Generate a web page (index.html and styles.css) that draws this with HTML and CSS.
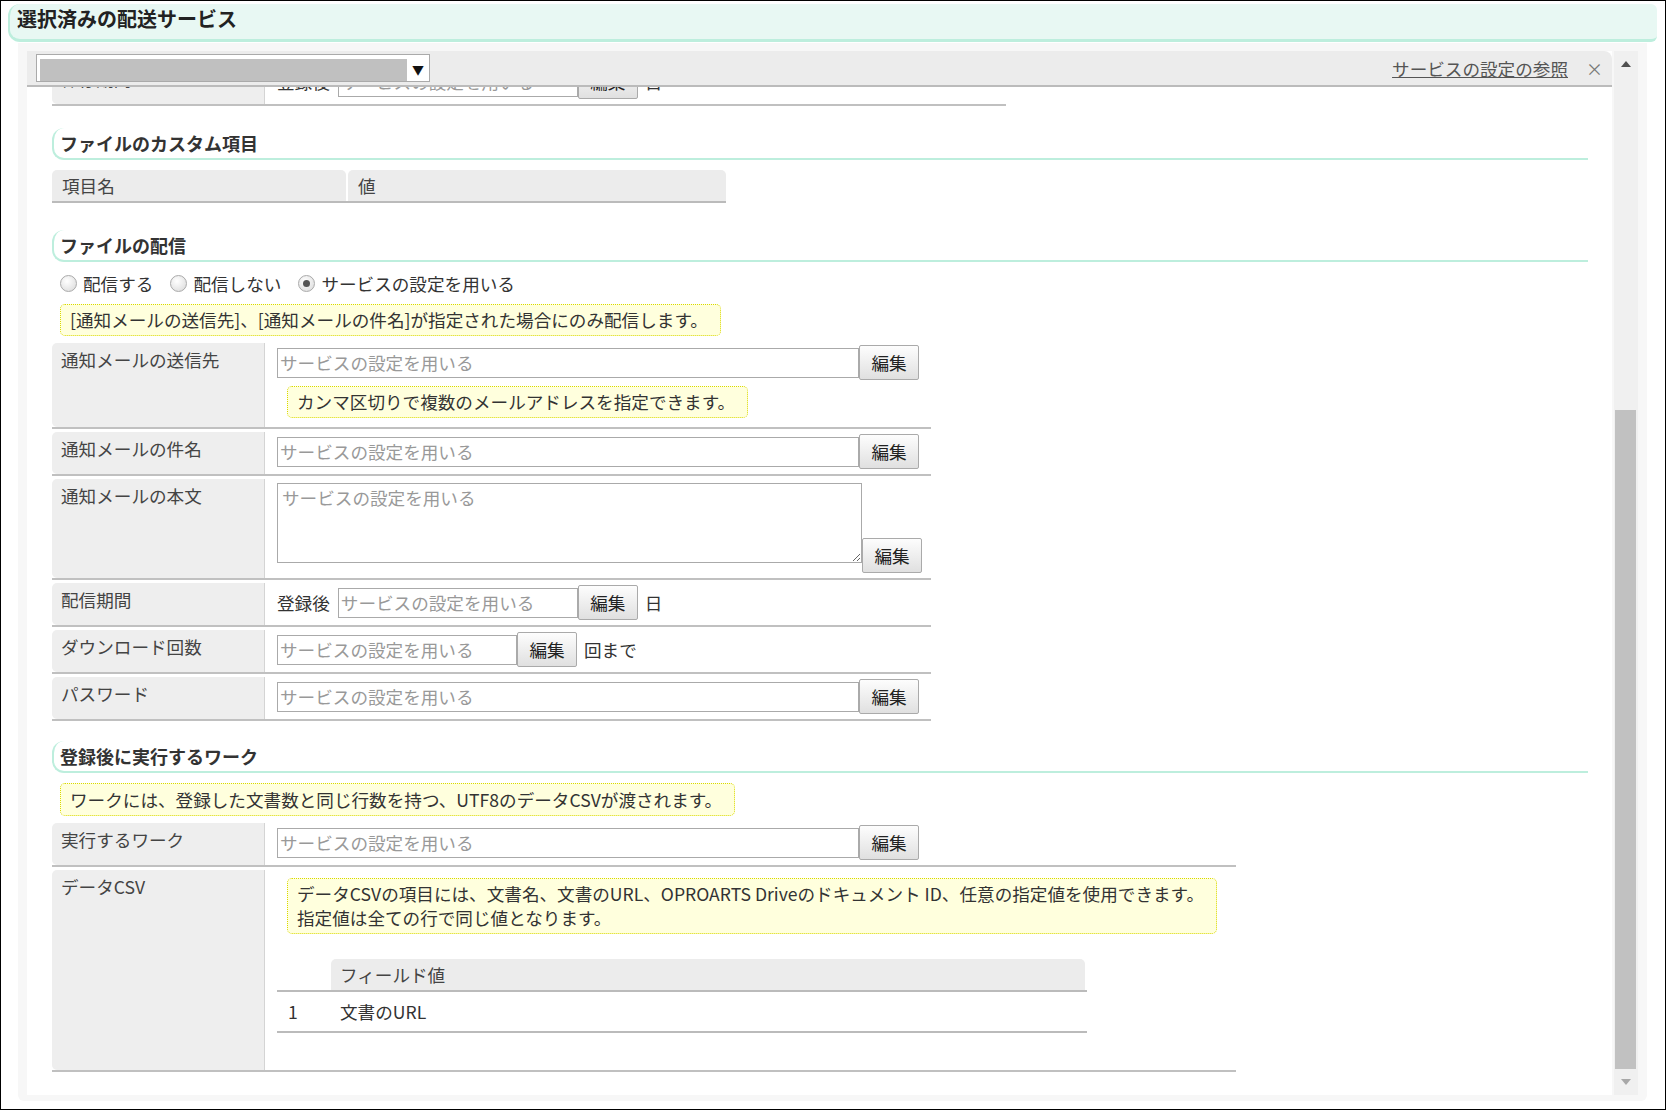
FILE: index.html
```html
<!DOCTYPE html>
<html lang="ja">
<head>
    <meta charset="UTF-8">
    <meta name="viewport" content="width=device-width, initial-scale=1.0">
    <title>選択済みの配送サービス</title>
    <link rel="stylesheet" href="styles.css">
</head>
<body>
    <div class="frame">
        <div class="title-bar">
            <h1>選択済みの配送サービス</h1>
        </div>

        <div class="panel">
            <div class="viewer">
                <div class="toolbar">
                    <div class="select">
                        <span class="select-value"></span>
                        <span class="select-arrow">▼</span>
                    </div>
                    <div class="toolbar-right">
                        <a class="ref-link" href="#">サービスの設定の参照</a>
                        <span class="close">×</span>
                    </div>
                </div>

                <div class="scroll-area">
                    <div class="content">
                        <!-- scrolled: only the bottom of this row is visible -->
                        <div class="form-row row-partial">
                            <div class="label-cell">保存期間</div>
                            <div class="value-cell">
                                <div class="field">
                                    <span class="pre-text">登録後</span>
                                    <input class="text-input short" type="text" placeholder="サービスの設定を用いる">
                                    <button class="btn">編集</button>
                                    <span class="post-text">日</span>
                                </div>
                            </div>
                        </div>

                        <h2 class="section-head">ファイルのカスタム項目</h2>
                        <div class="custom-table">
                            <div class="th th-name">項目名</div>
                            <div class="th th-value">値</div>
                        </div>

                        <h2 class="section-head head-gap">ファイルの配信</h2>
                        <div class="radios">
                            <span class="radio"></span><span class="radio-label">配信する</span>
                            <span class="radio"></span><span class="radio-label">配信しない</span>
                            <span class="radio checked"></span><span class="radio-label">サービスの設定を用いる</span>
                        </div>
                        <div class="note-line">
                            <div class="note">[通知メールの送信先]、[通知メールの件名]が指定された場合にのみ配信します。</div>
                        </div>

                        <div class="form-row">
                            <div class="label-cell">通知メールの送信先</div>
                            <div class="value-cell">
                                <div class="field">
                                    <input class="text-input" type="text" placeholder="サービスの設定を用いる">
                                    <button class="btn">編集</button>
                                </div>
                                <div class="note cell-note">カンマ区切りで複数のメールアドレスを指定できます。</div>
                            </div>
                        </div>
                        <div class="form-row">
                            <div class="label-cell">通知メールの件名</div>
                            <div class="value-cell">
                                <div class="field">
                                    <input class="text-input" type="text" placeholder="サービスの設定を用いる">
                                    <button class="btn">編集</button>
                                </div>
                            </div>
                        </div>
                        <div class="form-row">
                            <div class="label-cell">通知メールの本文</div>
                            <div class="value-cell">
                                <div class="field field-area">
                                    <textarea class="text-area" placeholder="サービスの設定を用いる"></textarea>
                                    <button class="btn btn-area">編集</button>
                                </div>
                            </div>
                        </div>
                        <div class="form-row">
                            <div class="label-cell">配信期間</div>
                            <div class="value-cell">
                                <div class="field">
                                    <span class="pre-text">登録後</span>
                                    <input class="text-input short" type="text" placeholder="サービスの設定を用いる">
                                    <button class="btn">編集</button>
                                    <span class="post-text">日</span>
                                </div>
                            </div>
                        </div>
                        <div class="form-row">
                            <div class="label-cell">ダウンロード回数</div>
                            <div class="value-cell">
                                <div class="field">
                                    <input class="text-input short" type="text" placeholder="サービスの設定を用いる">
                                    <button class="btn">編集</button>
                                    <span class="post-text">回まで</span>
                                </div>
                            </div>
                        </div>
                        <div class="form-row">
                            <div class="label-cell">パスワード</div>
                            <div class="value-cell">
                                <div class="field">
                                    <input class="text-input" type="text" placeholder="サービスの設定を用いる">
                                    <button class="btn">編集</button>
                                </div>
                            </div>
                        </div>

                        <h2 class="section-head head-work">登録後に実行するワーク</h2>
                        <div class="note-line note-line-work">
                            <div class="note">ワークには、登録した文書数と同じ行数を持つ、UTF8のデータCSVが渡されます。</div>
                        </div>
                        <div class="form-row row-wide">
                            <div class="label-cell">実行するワーク</div>
                            <div class="value-cell">
                                <div class="field">
                                    <input class="text-input" type="text" placeholder="サービスの設定を用いる">
                                    <button class="btn">編集</button>
                                </div>
                            </div>
                        </div>
                        <div class="form-row row-wide">
                            <div class="label-cell">データCSV</div>
                            <div class="value-cell csv-cell">
                                <div class="note cell-note csv-note">データCSVの項目には、文書名、文書のURL、OPROARTS Driveのドキュメント ID、任意の指定値を使用できます。<br>指定値は全ての行で同じ値となります。</div>
                                <div class="fields">
                                    <div class="fields-head">
                                        <div class="col-num"></div>
                                        <div class="col-value">フィールド値</div>
                                    </div>
                                    <div class="fields-row">
                                        <div class="col-num">1</div>
                                        <div class="col-text">文書のURL</div>
                                    </div>
                                </div>
                            </div>
                        </div>
                    </div>
                </div>
            </div>

            <div class="scrollbar">
                <div class="sb-up"><span class="arrow-up"></span></div>
                <div class="sb-thumb"></div>
                <div class="sb-down"><span class="arrow-down"></span></div>
            </div>
        </div>
    </div>
</body>
</html>
```

FILE: styles.css
```css
* {
    box-sizing: border-box;
    margin: 0;
    padding: 0;
}

body {
    font-family: "Noto Sans CJK JP", "Noto Sans", sans-serif;
    font-size: 17.6px;
    color: #333;
    background-color: #fff;
}

.frame {
    width: 1666px;
    height: 1110px;
    border: 1px solid #000;
    padding-top: 3px;
    overflow: hidden;
}

/* title */
.title-bar {
    margin: 0 8px 0 7px;
    height: 38px;
    background-color: #e8f8f3;
    border-left: 2px solid #bdeedd;
    border-bottom: 3px solid #bdeedd;
    border-radius: 12px 6px 6px 12px;
    padding-left: 7px;
}

.title-bar h1 {
    font-size: 20px;
    line-height: 30px;
    font-weight: bold;
    color: #222;
}

/* panel */
.panel {
    margin: 1px 18px 0 17px;
    height: 1058px;
    background-color: #f7f7f7;
    border-radius: 0 0 6px 6px;
    padding: 8px 9px 6px 9px;
    display: flex;
}

.viewer {
    flex: 1;
    min-width: 0;
    display: flex;
    flex-direction: column;
    background-color: #fff;
}

.toolbar {
    flex: none;
    height: 36px;
    background-color: #ececec;
    border-bottom: 2px solid #bbb;
    border-radius: 0 8px 0 0;
    display: flex;
    align-items: center;
    justify-content: space-between;
    padding: 0 9px 0 9px;
}

.select {
    width: 394px;
    height: 28px;
    border: 1px solid #aaa;
    background-color: #fff;
    display: flex;
    align-items: center;
    padding: 3px 0 0 3px;
}

.select-value {
    width: 367px;
    height: 22px;
    background-color: #c0c0c0;
    align-self: flex-end;
}

.select-arrow {
    flex: 1;
    text-align: center;
    font-size: 12px;
    color: #111;
}

.toolbar-right {
    display: flex;
    align-items: center;
    gap: 18px;
}

.ref-link {
    color: #555;
    text-decoration: underline;
    font-size: 17.6px;
}

.close {
    font-size: 17px;
    color: #777;
}

.scroll-area {
    flex: 1;
    overflow: hidden;
}

.content {
    padding: 0 24px 0 25px;
}

/* section heading */
.section-head {
    margin-top: 22px;
    height: 32px;
    border-left: 2px solid #bdeedd;
    border-bottom: 2px solid #bdeedd;
    border-radius: 12px 0 0 12px;
    padding-left: 6px;
    font-size: 18px;
    line-height: 30px;
    font-weight: bold;
    color: #333;
}

.head-gap {
    margin-top: 27px;
}

.head-work {
    margin-top: 20px;
}

/* custom items table */
.custom-table {
    margin-top: 10px;
    width: 674px;
    display: flex;
    gap: 2px;
    border-bottom: 2px solid #bbb;
}

.th {
    height: 31px;
    line-height: 31px;
    padding-left: 10px;
    background-color: #ececec;
    border-radius: 5px 5px 0 0;
    color: #444;
}

.th-name {
    width: 294px;
}

.th-value {
    flex: 1;
}

/* radios */
.radios {
    margin-top: 8px;
    height: 26px;
    display: flex;
    align-items: center;
    padding-left: 8px;
}

.radio {
    width: 17px;
    height: 17px;
    border-radius: 50%;
    border: 1px solid #aaa;
    background: radial-gradient(circle at 40% 35%, #fff, #d8d8d8);
    margin-right: 6px;
    display: flex;
    align-items: center;
    justify-content: center;
}

.radio.checked::after {
    content: "";
    width: 7px;
    height: 7px;
    border-radius: 50%;
    background-color: #555;
}

.radio-label {
    margin-right: 17px;
    color: #333;
}

/* notes */
.note-line {
    display: flex;
    padding: 8px 0 4px 8px;
}

.note-line-work {
    padding-top: 10px;
    padding-bottom: 4px;
}

.note-line-work .note {
    padding-top: 4px;
}

.note {
    display: inline-block;
    background-color: #ffffdd;
    border: 1px dotted #d9d900;
    border-radius: 5px;
    padding: 3px 12px 3px 9px;
    line-height: 24px;
    color: #333;
}

.cell-note {
    margin: 6px 0 4px 10px;
}

/* form rows */
.form-row {
    display: flex;
    width: 879px;
    margin-top: 3px;
    border-bottom: 2px solid #c0c0c0;
}

.row-partial {
    margin-top: -25px;
    width: 954px;
}

.row-wide {
    width: 1184px;
}

.label-cell {
    width: 213px;
    flex: none;
    background-color: #eee;
    border-right: 1px solid #d4d4d4;
    border-radius: 5px 0 0 5px;
    padding: 5px 9px;
    line-height: 24px;
    color: #444;
}

.value-cell {
    flex: 1;
    padding: 2px 0 5px 12px;
}

.field {
    display: flex;
    align-items: center;
}

.text-input {
    width: 582px;
    height: 30px;
    border: 1px solid #aaa;
    padding: 0 2px;
    font: inherit;
    color: #333;
    background-color: #fff;
}

.text-input.short {
    width: 240px;
}

.text-input::placeholder,
.text-area::placeholder {
    color: #999;
}

.btn {
    width: 60px;
    height: 35px;
    border: 1px solid #aaa;
    border-radius: 2px;
    background: linear-gradient(#fdfdfd, #e0e0e0);
    font: inherit;
    line-height: 1;
    color: #222;
    cursor: pointer;
}

.pre-text {
    margin-right: 8px;
}

.post-text {
    margin-left: 7px;
}

.field-area {
    align-items: flex-start;
}

.text-area {
    width: 585px;
    height: 80px;
    margin-top: 2px;
    border: 1px solid #aaa;
    padding: 2px 4px;
    font: inherit;
    line-height: 24px;
    color: #333;
}

.btn-area {
    margin-top: 57px;
}

/* data csv */
.csv-cell {
    padding: 8px 0 37px 12px;
}

.csv-note {
    margin: 0 0 0 10px;
}

.fields {
    margin-top: 25px;
    width: 810px;
}

.fields-head {
    display: flex;
    border-bottom: 2px solid #bbb;
}

.fields-head .col-num {
    width: 54px;
}

.col-value {
    width: 754px;
    height: 31px;
    line-height: 31px;
    padding-left: 9px;
    background-color: #ececec;
    border-radius: 5px 5px 0 0;
    color: #444;
}

.fields-row {
    display: flex;
    height: 41px;
    line-height: 40px;
    border-bottom: 2px solid #bbb;
}

.fields-row .col-num {
    width: 54px;
    padding-left: 11px;
}

.col-text {
    padding-left: 9px;
}

/* scrollbar */
.scrollbar {
    width: 24px;
    margin-left: 2px;
    background-color: #f0f0f0;
    display: flex;
    flex-direction: column;
}

.sb-up,
.sb-down {
    height: 26px;
    display: flex;
    align-items: center;
    justify-content: center;
}

.sb-down {
    margin-top: auto;
}

.arrow-up {
    width: 0;
    height: 0;
    border-left: 5px solid transparent;
    border-right: 5px solid transparent;
    border-bottom: 6px solid #505050;
}

.arrow-down {
    width: 0;
    height: 0;
    border-left: 5px solid transparent;
    border-right: 5px solid transparent;
    border-top: 6px solid #a8a8a8;
}

.sb-thumb {
    margin: 333px 2px 0 1px;
    height: 659px;
    background-color: #c1c1c1;
}
```
